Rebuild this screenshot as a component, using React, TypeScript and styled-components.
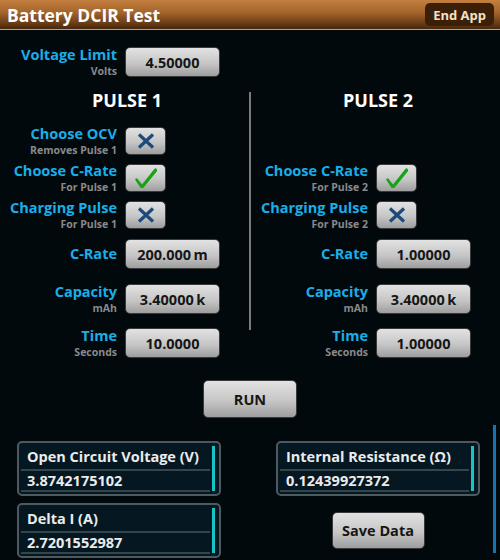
import React from 'react'
import styled, { createGlobalStyle } from 'styled-components'

const GlobalStyle = createGlobalStyle`
  body {
    margin: 0;
    background: #02090d;
  }
`

const Page = styled.div`
  position: relative;
  width: 500px;
  height: 560px;
  overflow: hidden;
  background: #02090d;
  font-family: 'Open Sans', 'DejaVu Sans', sans-serif;
  font-weight: 700;
`

const Header = styled.div`
  height: 29px;
  display: flex;
  align-items: center;
  justify-content: space-between;
  padding: 0 6px 0 7px;
  border-bottom: 1px solid #a6a6a6;
  background: linear-gradient(#c47f40 0%, #a2632a 45%, #48270b 100%);
`

const Title = styled.h1`
  margin: 0;
  font-size: 17.5px;
  color: #fff;
`

const EndApp = styled.button`
  height: 23px;
  padding: 0 8px;
  border: none;
  border-radius: 5px;
  background: #3c1f09;
  color: #f3e1c5;
  font-family: inherit;
  font-weight: 700;
  font-size: 13px;
`

const Body = styled.div`
  padding-top: 16px;
`

const Field = styled.div<{ $h: number }>`
  display: grid;
  grid-template-columns: 117px auto;
  column-gap: 8px;
  align-items: center;
  height: ${(p) => p.$h}px;
`

const LabelBlock = styled.div`
  display: flex;
  flex-direction: column;
  align-items: flex-end;
  text-align: right;
  white-space: nowrap;
`

const MainLabel = styled.span`
  color: #1aaee8;
  font-size: 14.5px;
  line-height: 18px;
`

const SubLabel = styled.span`
  color: #8a8a8a;
  font-size: 10.5px;
  line-height: 14px;
`

const GrayButton = styled.button<{ $w: number; $h: number }>`
  width: ${(p) => p.$w}px;
  height: ${(p) => p.$h}px;
  display: flex;
  align-items: center;
  justify-content: center;
  padding: 0;
  border: 1px solid #3a3a3a;
  border-radius: 5px;
  background: linear-gradient(#e2e2e2 0%, #c6c6c6 55%, #9e9e9e 100%);
  color: #161616;
  font-family: inherit;
  font-weight: 700;
  font-size: 14.5px;
`

const PulseGrid = styled.div`
  display: grid;
  grid-template-columns: 249px 2px 249px;
  margin-top: 12px;
`

const Divider = styled.div`
  width: 2px;
  height: 238px;
  margin-top: 4px;
  background: #7c7c7c;
`

const PulseColumn = styled.div`
  display: flex;
  flex-direction: column;
`

const PulseHeading = styled.div`
  padding-left: 5px;
  text-align: center;
  font-size: 18px;
  line-height: 24px;
  color: #fff;
  margin-bottom: 13px;
`

const ToggleList = styled.div`
  display: flex;
  flex-direction: column;
  gap: 9px;
`

const Spacer = styled.div`
  height: 28px;
`

const ValueList = styled.div`
  display: flex;
  flex-direction: column;
  gap: 14px;
  margin-top: 12px;
`

const RunRow = styled.div`
  display: flex;
  justify-content: center;
  margin-top: 23px;
`

const Outputs = styled.div`
  display: grid;
  grid-template-columns: 204px 204px;
  column-gap: 55px;
  padding-left: 17px;
  margin-top: 23px;
`

const OutputStack = styled.div<{ $gap: number }>`
  display: flex;
  flex-direction: column;
  align-items: center;
  gap: ${(p) => p.$gap}px;
`

const OutputBox = styled.div`
  box-sizing: border-box;
  width: 204px;
  height: 55px;
  display: flex;
  padding: 2px;
  border: 2px solid #4d5b61;
  border-radius: 5px;
  background: #051822;
`

const OutputRows = styled.div`
  flex: 1;
  display: flex;
  flex-direction: column;
`

const OutputLine = styled.div<{ $h: number }>`
  height: ${(p) => p.$h}px;
  line-height: ${(p) => p.$h}px;
  padding-left: 6px;
  border-bottom: 2px solid #35454c;
  color: #ebebeb;
  font-size: 14.5px;
  white-space: nowrap;
`

const CyanBar = styled.div`
  width: 3px;
  margin: 1px 2px 1px 2px;
  background: #18c4c6;
`

const ScrollBar = styled.div`
  position: absolute;
  left: 493px;
  top: 425px;
  width: 3px;
  height: 128px;
  background: #1274b0;
`

const XIcon = () => (
  <svg width="18" height="16" viewBox="0 0 18 16">
    <path d="M2 1.5 L16 14.5 M16 1.5 L2 14.5" stroke="#1d4a7a" strokeWidth="3.2" />
  </svg>
)

const CheckIcon = () => (
  <svg width="22" height="20" viewBox="0 0 22 20">
    <path d="M1.5 11.5 L7 18.5 L20.5 1.5 L21 2.5 L7.5 19 L6.5 19 Z" fill="#16a316" stroke="#16a316" strokeWidth="2.4" strokeLinejoin="round" />
  </svg>
)

type LabelProps = { main: string; sub?: string }

function Label({ main, sub }: LabelProps) {
  return (
    <LabelBlock>
      <MainLabel>{main}</MainLabel>
      {sub && <SubLabel>{sub}</SubLabel>}
    </LabelBlock>
  )
}

function ToggleField({ main, sub, on }: LabelProps & { on: boolean }) {
  return (
    <Field $h={28}>
      <Label main={main} sub={sub} />
      <GrayButton $w={41} $h={28}>{on ? <CheckIcon /> : <XIcon />}</GrayButton>
    </Field>
  )
}

function ValueField({ main, sub, value }: LabelProps & { value: string }) {
  return (
    <Field $h={30}>
      <Label main={main} sub={sub} />
      <GrayButton $w={95} $h={30}>{value}</GrayButton>
    </Field>
  )
}

function Output({ title, value }: { title: string; value: string }) {
  return (
    <OutputBox>
      <OutputRows>
        <OutputLine $h={24}>{title}</OutputLine>
        <OutputLine $h={19}>{value}</OutputLine>
      </OutputRows>
      <CyanBar />
    </OutputBox>
  )
}

const pulses = [
  { name: 'PULSE 1', ocv: true, rate: '200.000\u2009m', time: '10.0000' },
  { name: 'PULSE 2', ocv: false, rate: '1.00000', time: '1.00000' },
]

export default function App() {
  const n = (i: number) => String(i + 1)

  return (
    <Page>
      <GlobalStyle />
      <Header>
        <Title>Battery DCIR Test</Title>
        <EndApp>End App</EndApp>
      </Header>
      <Body>
        <ValueField main="Voltage Limit" sub="Volts" value="4.50000" />
        <PulseGrid>
          {pulses.map((p, i) => (
            <React.Fragment key={p.name}>
              {i === 1 && <Divider />}
              <PulseColumn>
                <PulseHeading>{p.name}</PulseHeading>
                <ToggleList>
                  {p.ocv ? (
                    <ToggleField main="Choose OCV" sub={`Removes Pulse ${n(i)}`} on={false} />
                  ) : (
                    <Spacer />
                  )}
                  <ToggleField main="Choose C-Rate" sub={`For Pulse ${n(i)}`} on />
                  <ToggleField main="Charging Pulse" sub={`For Pulse ${n(i)}`} on={false} />
                </ToggleList>
                <ValueList>
                  <ValueField main="C-Rate" value={p.rate} />
                  <ValueField main="Capacity" sub="mAh" value={'3.40000\u2009k'} />
                  <ValueField main="Time" sub="Seconds" value={p.time} />
                </ValueList>
              </PulseColumn>
            </React.Fragment>
          ))}
        </PulseGrid>
        <RunRow>
          <GrayButton $w={94} $h={38}>RUN</GrayButton>
        </RunRow>
        <Outputs>
          <OutputStack $gap={7}>
            <Output title="Open Circuit Voltage (V)" value="3.8742175102" />
            <Output title="Delta I (A)" value="2.7201552987" />
          </OutputStack>
          <OutputStack $gap={16}>
            <Output title="Internal Resistance (Ω)" value="0.12439927372" />
            <GrayButton $w={93} $h={37}>Save Data</GrayButton>
          </OutputStack>
        </Outputs>
      </Body>
      <ScrollBar />
    </Page>
  )
}
